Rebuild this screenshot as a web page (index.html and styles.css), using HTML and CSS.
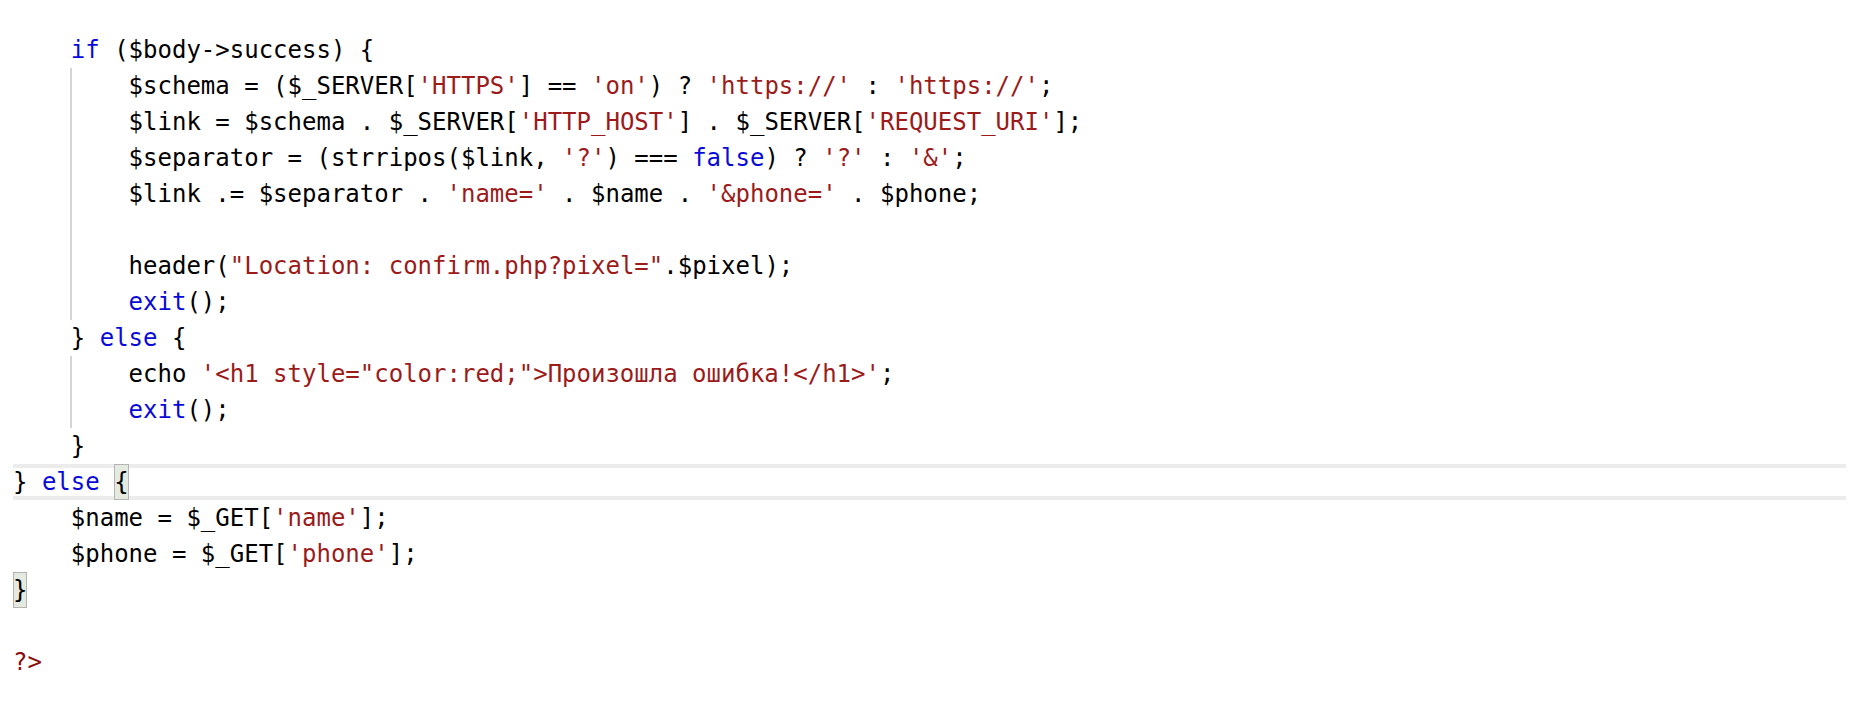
FILE: index.html
```html
<!DOCTYPE html>
<html lang="ru">
<head>
<meta charset="utf-8">
<title>code</title>
<link rel="stylesheet" href="styles.css">
</head>
<body>
<div class="editor">
<div class="line">    <span class="kw">if</span> ($body-&gt;success) {</div>
<div class="guide">
<div class="line">        $schema = ($_SERVER[<span class="str">'HTTPS'</span>] == <span class="str">'on'</span>) ? <span class="str">'https://'</span> : <span class="str">'https://'</span>;</div>
<div class="line">        $link = $schema . $_SERVER[<span class="str">'HTTP_HOST'</span>] . $_SERVER[<span class="str">'REQUEST_URI'</span>];</div>
<div class="line">        $separator = (strripos($link, <span class="str">'?'</span>) === <span class="kw">false</span>) ? <span class="str">'?'</span> : <span class="str">'&amp;'</span>;</div>
<div class="line">        $link .= $separator . <span class="str">'name='</span> . $name . <span class="str">'&amp;phone='</span> . $phone;</div>
<div class="line"> </div>
<div class="line">        header(<span class="str">"Location: confirm.php?pixel="</span>.$pixel);</div>
<div class="line">        <span class="kw">exit</span>();</div>
</div>
<div class="line">    } <span class="kw">else</span> {</div>
<div class="guide">
<div class="line">        echo <span class="str">'&lt;h1 style="color:red;"&gt;Произошла ошибка!&lt;/h1&gt;'</span>;</div>
<div class="line">        <span class="kw">exit</span>();</div>
</div>
<div class="line">    }</div>
<div class="line current">} <span class="kw">else</span> <span class="match">{</span></div>
<div class="line">    $name = $_GET[<span class="str">'name'</span>];</div>
<div class="line">    $phone = $_GET[<span class="str">'phone'</span>];</div>
<div class="line"><span class="match">}</span></div>
<div class="line"> </div>
<div class="line"><span class="tag">?&gt;</span></div>
</div>
</body>
</html>
```

FILE: styles.css
```css
html, body {
  margin: 0;
  padding: 0;
  background: #ffffff;
}

.editor {
  box-sizing: border-box;
  width: 1846px;
  padding: 32px 0 0 13px;
  font-family: "DejaVu Sans Mono", "Liberation Mono", monospace;
  font-size: 24px;
  color: #000000;
}

.line {
  height: 36px;
  line-height: 36px;
  white-space: pre;
}

.guide {
  background-image: linear-gradient(#d4d4d4, #d4d4d4);
  background-repeat: no-repeat;
  background-position: calc(4ch - 1px) 0;
  background-size: 2px 100%;
}

.current {
  box-shadow: inset 0 4px 0 #ececec, inset 0 -4px 0 #ececec;
}

.kw {
  color: #0a0ad8;
}

.str {
  color: #9b1b1b;
}

.tag {
  color: #8b0f0f;
}

.match {
  display: inline-block;
  width: 1ch;
  height: 36px;
  vertical-align: top;
  background: #e4eadf;
  box-shadow: inset 0 0 0 1px #b4b4b4;
}
```
